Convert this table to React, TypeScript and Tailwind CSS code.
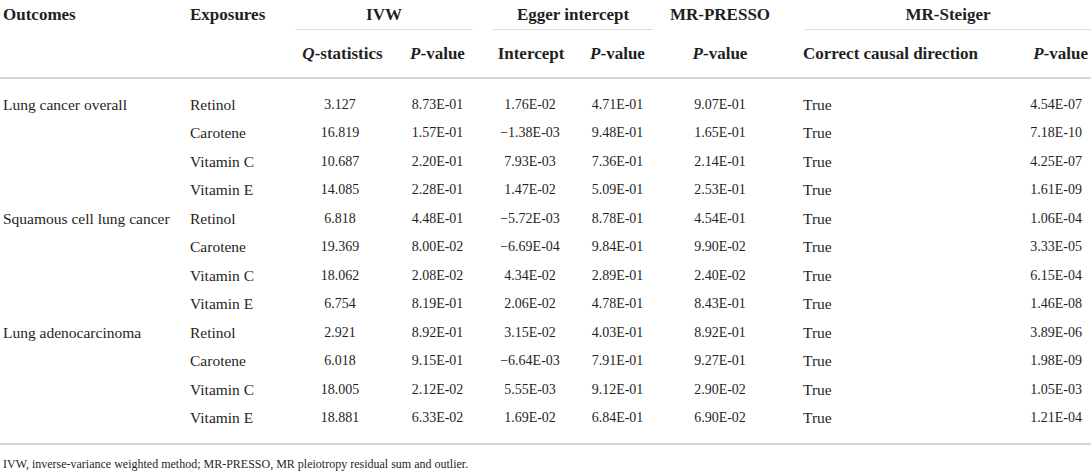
// MRSensitivityTable — sensitivity analyses (IVW, Egger, MR-PRESSO, MR-Steiger) for vitamin exposures.
import React from 'react';

type Row = {
  outcome?: string;
  exposure: string;
  q: string;
  ivwP: string;
  intercept: string;
  eggerP: string;
  pressoP: string;
  direction: string;
  steigerP: string;
};

const rows: Row[] = [
  { outcome: 'Lung cancer overall', exposure: 'Retinol', q: '3.127', ivwP: '8.73E-01', intercept: '1.76E-02', eggerP: '4.71E-01', pressoP: '9.07E-01', direction: 'True', steigerP: '4.54E-07' },
  { exposure: 'Carotene', q: '16.819', ivwP: '1.57E-01', intercept: '\u22121.38E-03', eggerP: '9.48E-01', pressoP: '1.65E-01', direction: 'True', steigerP: '7.18E-10' },
  { exposure: 'Vitamin C', q: '10.687', ivwP: '2.20E-01', intercept: '7.93E-03', eggerP: '7.36E-01', pressoP: '2.14E-01', direction: 'True', steigerP: '4.25E-07' },
  { exposure: 'Vitamin E', q: '14.085', ivwP: '2.28E-01', intercept: '1.47E-02', eggerP: '5.09E-01', pressoP: '2.53E-01', direction: 'True', steigerP: '1.61E-09' },
  { outcome: 'Squamous cell lung cancer', exposure: 'Retinol', q: '6.818', ivwP: '4.48E-01', intercept: '\u22125.72E-03', eggerP: '8.78E-01', pressoP: '4.54E-01', direction: 'True', steigerP: '1.06E-04' },
  { exposure: 'Carotene', q: '19.369', ivwP: '8.00E-02', intercept: '\u22126.69E-04', eggerP: '9.84E-01', pressoP: '9.90E-02', direction: 'True', steigerP: '3.33E-05' },
  { exposure: 'Vitamin C', q: '18.062', ivwP: '2.08E-02', intercept: '4.34E-02', eggerP: '2.89E-01', pressoP: '2.40E-02', direction: 'True', steigerP: '6.15E-04' },
  { exposure: 'Vitamin E', q: '6.754', ivwP: '8.19E-01', intercept: '2.06E-02', eggerP: '4.78E-01', pressoP: '8.43E-01', direction: 'True', steigerP: '1.46E-08' },
  { outcome: 'Lung adenocarcinoma', exposure: 'Retinol', q: '2.921', ivwP: '8.92E-01', intercept: '3.15E-02', eggerP: '4.03E-01', pressoP: '8.92E-01', direction: 'True', steigerP: '3.89E-06' },
  { exposure: 'Carotene', q: '6.018', ivwP: '9.15E-01', intercept: '\u22126.64E-03', eggerP: '7.91E-01', pressoP: '9.27E-01', direction: 'True', steigerP: '1.98E-09' },
  { exposure: 'Vitamin C', q: '18.005', ivwP: '2.12E-02', intercept: '5.55E-03', eggerP: '9.12E-01', pressoP: '2.90E-02', direction: 'True', steigerP: '1.05E-03' },
  { exposure: 'Vitamin E', q: '18.881', ivwP: '6.33E-02', intercept: '1.69E-02', eggerP: '6.84E-01', pressoP: '6.90E-02', direction: 'True', steigerP: '1.21E-04' },
];

const cols = 'grid grid-cols-[185px_105px_100px_95px_90px_85px_120px_205px_106px]';

const PValue: React.FC = () => (
  <span>
    <i>P</i>-value
  </span>
);

const App: React.FC = () => {
  return (
    <div className="w-[1091px] h-[471px] bg-white text-[#1f1f1f] font-['Liberation_Serif',serif] overflow-hidden">
      {/* Header, first line: groups */}
      <div className={`${cols} h-[29px] items-center text-[17px] font-bold`}>
        <div className="pl-[3px]">Outcomes</div>
        <div className="pl-[5px]">Exposures</div>
        <div className="col-span-2 text-center pl-[5px] pr-[12px]">IVW</div>
        <div className="col-span-2 text-center pl-[8px] pr-[7px]">Egger intercept</div>
        <div className="text-center">MR-PRESSO</div>
        <div className="col-span-2 text-center pl-[25px]">MR-Steiger</div>
      </div>
      {/* group rules */}
      <div className={`${cols} h-px`}>
        <div />
        <div />
        <div className="col-span-2 ml-[5px] mr-[12px] bg-[#dcdcdc]" />
        <div className="col-span-2 ml-[8px] mr-[7px] bg-[#dcdcdc]" />
        <div />
        <div className="col-span-2 ml-[25px] bg-[#dcdcdc]" />
      </div>
      {/* Header, second line: sub columns */}
      <div className={`${cols} h-[47px] items-center text-[17px] font-bold`}>
        <div />
        <div />
        <div className="text-center pl-[5px]">
          <i>Q</i>-statistics
        </div>
        <div className="text-center"><PValue /></div>
        <div className="text-center pl-[2px]">Intercept</div>
        <div className="text-center"><PValue /></div>
        <div className="text-center"><PValue /></div>
        <div className="pl-[23px]">Correct causal direction</div>
        <div className="text-right pr-[3px]"><PValue /></div>
      </div>
      <div className="h-[2px] bg-[#d6d6d6]" />

      {/* Body */}
      <div className="pt-[11px] pb-[11px]">
        {rows.map((r, i) => (
          <div key={i} className={`${cols} h-[28.5px] items-center text-[14px]`}>
            <div className="pl-[3px] text-[15.5px]">{r.outcome ?? ''}</div>
            <div className="pl-[5px] text-[15.5px]">{r.exposure}</div>
            <div className="text-center">{r.q}</div>
            <div className="text-center">{r.ivwP}</div>
            <div className="text-center">{r.intercept}</div>
            <div className="text-center">{r.eggerP}</div>
            <div className="text-center">{r.pressoP}</div>
            <div className="pl-[23px] text-[15.5px]">{r.direction}</div>
            <div className="text-right pr-[9px]">{r.steigerP}</div>
          </div>
        ))}
      </div>
      <div className="h-[2px] bg-[#d6d6d6]" />

      <p className="pl-[3px] pt-[12px] text-[12px] leading-[14px]">
        IVW, inverse-variance weighted method; MR-PRESSO, MR pleiotropy residual sum and outlier.
      </p>
    </div>
  );
};

export default App;
